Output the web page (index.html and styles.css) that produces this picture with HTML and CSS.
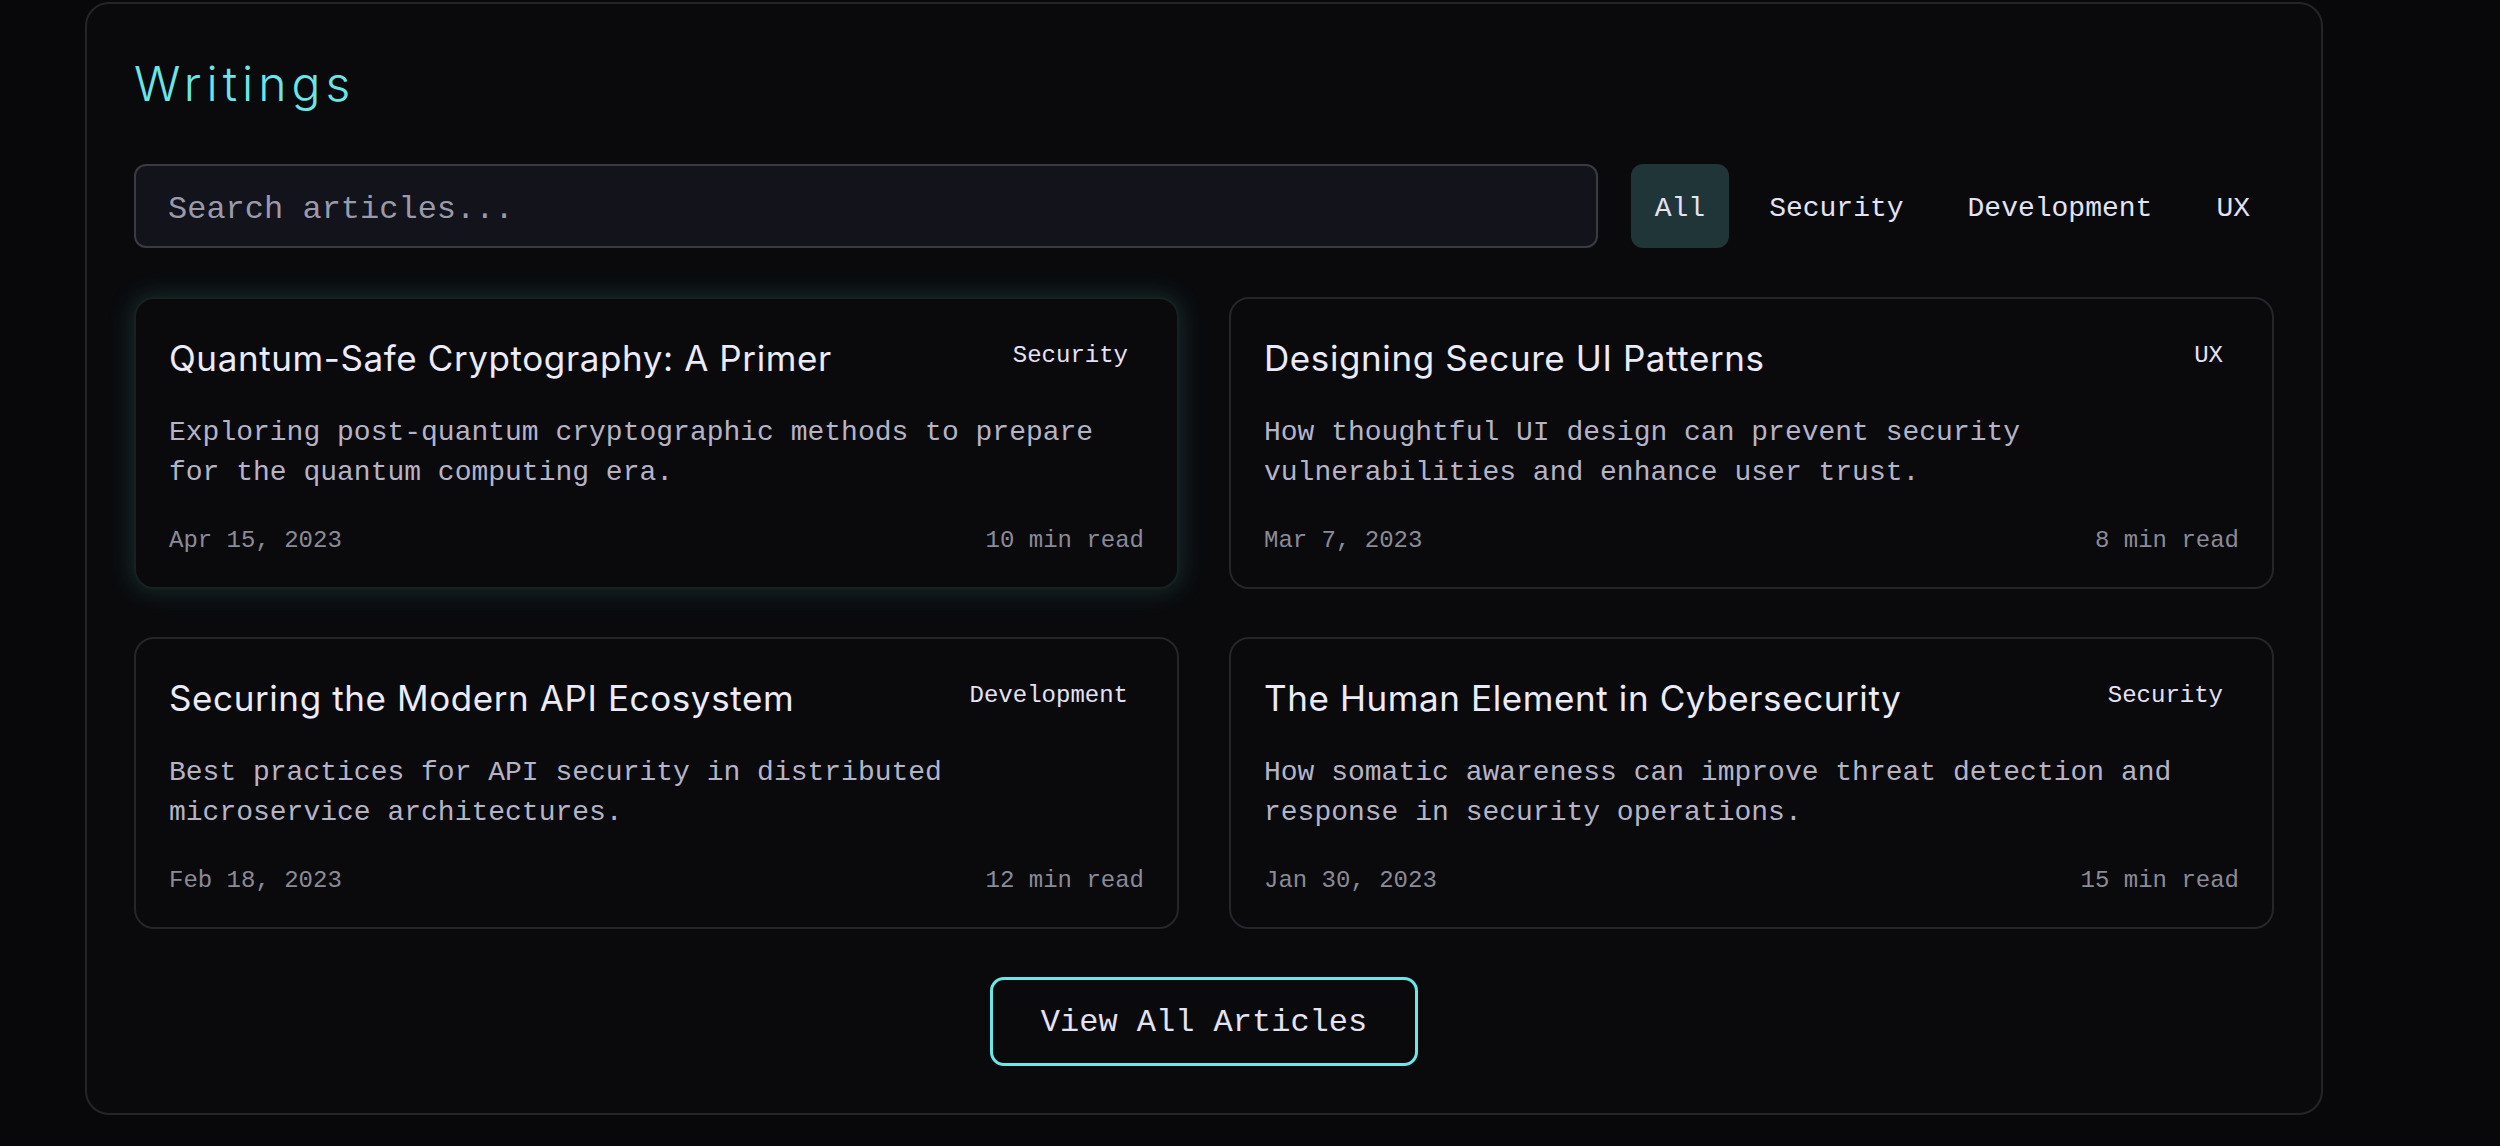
FILE: index.html
```html
<!DOCTYPE html>
<html lang="en">
<head>
<meta charset="utf-8">
<title>Writings</title>
<link rel="stylesheet" href="styles.css">
</head>
<body>
<div class="page">
  <section class="panel">
    <h2 class="panel-title">Writings</h2>
    <div class="toolbar">
      <input class="search" type="text" placeholder="Search articles...">
      <div class="filters">
        <button class="filter active">All</button>
        <button class="filter">Security</button>
        <button class="filter">Development</button>
        <button class="filter">UX</button>
      </div>
    </div>
    <div class="grid">
      <article class="card featured">
        <div class="card-head">
          <h3 class="card-title">Quantum-Safe Cryptography: A Primer</h3>
          <span class="tag">Security</span>
        </div>
        <p class="card-desc">Exploring post-quantum cryptographic methods to prepare for the quantum computing era.</p>
        <div class="card-meta"><span>Apr 15, 2023</span><span>10 min read</span></div>
      </article>
      <article class="card">
        <div class="card-head">
          <h3 class="card-title">Designing Secure UI Patterns</h3>
          <span class="tag">UX</span>
        </div>
        <p class="card-desc">How thoughtful UI design can prevent security vulnerabilities and enhance user trust.</p>
        <div class="card-meta"><span>Mar 7, 2023</span><span>8 min read</span></div>
      </article>
      <article class="card">
        <div class="card-head">
          <h3 class="card-title">Securing the Modern API Ecosystem</h3>
          <span class="tag">Development</span>
        </div>
        <p class="card-desc">Best practices for API security in distributed microservice architectures.</p>
        <div class="card-meta"><span>Feb 18, 2023</span><span>12 min read</span></div>
      </article>
      <article class="card">
        <div class="card-head">
          <h3 class="card-title">The Human Element in Cybersecurity</h3>
          <span class="tag">Security</span>
        </div>
        <p class="card-desc">How somatic awareness can improve threat detection and response in security operations.</p>
        <div class="card-meta"><span>Jan 30, 2023</span><span>15 min read</span></div>
      </article>
    </div>
    <div class="more">
      <button class="more-btn">View All Articles</button>
    </div>
  </section>
</div>
</body>
</html>
```

FILE: styles.css
```css
* {
  box-sizing: border-box;
}

html, body {
  margin: 0;
  padding: 0;
  background: #08080a;
}

body {
  font-family: "Liberation Mono", "DejaVu Sans Mono", monospace;
  color: #e4e2f5;
}

.page {
  padding: 2px 0 40px 85px;
}

.panel {
  width: 2238px;
  background: #0a0a0d;
  border: 2px solid #252529;
  border-radius: 24px;
  padding: 48px 47px 47px 47px;
}

.panel-title {
  margin: 0 0 48px 0;
  font-family: "Inter", "Noto Sans", sans-serif;
  font-weight: 300;
  font-size: 48px;
  line-height: 64px;
  letter-spacing: 5px;
  color: #6ae6e8;
}

.toolbar {
  display: flex;
  align-items: center;
  gap: 33px;
  margin-bottom: 49px;
}

.search {
  flex: 1;
  height: 84px;
  padding: 6px 32px 0 32px;
  background: #13131b;
  border: 2px solid #3a3a45;
  border-radius: 12px;
  font-family: "Liberation Mono", "DejaVu Sans Mono", monospace;
  font-size: 32px;
  color: #e4e2f5;
  outline: none;
}

.search::placeholder {
  color: #9b9aab;
}

.filters {
  display: flex;
  gap: 16px;
}

.filter {
  height: 84px;
  padding: 6px 24px 0 24px;
  border: none;
  border-radius: 12px;
  background: transparent;
  font-family: "Liberation Mono", "DejaVu Sans Mono", monospace;
  font-size: 28px;
  line-height: 40px;
  color: #e4e2f5;
}

.filter.active {
  background: #203538;
}

.grid {
  display: grid;
  grid-template-columns: 1fr 1fr;
  gap: 48px 50px;
}

.card {
  height: 292px;
  background: #0a0a0d;
  border: 2px solid #25252a;
  border-radius: 20px;
  padding: 33px 33px 31px 33px;
}

.card.featured {
  border-color: #16221f;
  box-shadow: 0 0 22px 5px rgba(80, 200, 180, 0.15);
}

.card-head {
  display: flex;
  justify-content: space-between;
  align-items: flex-start;
  gap: 24px;
}

.card-title {
  margin: 0;
  padding-top: 2px;
  font-family: "Inter", "Noto Sans", sans-serif;
  font-weight: 400;
  font-size: 35px;
  line-height: 49px;
  letter-spacing: 0.6px;
  color: #ecebfa;
}

.tag {
  flex-shrink: 0;
  padding: 8px 16px;
  font-size: 24px;
  line-height: 32px;
  color: #e4e2f5;
}

.card-desc {
  margin: 30px 0 0 0;
  font-size: 28px;
  line-height: 40px;
  color: #b5b4c6;
}

.card-meta {
  display: flex;
  justify-content: space-between;
  margin-top: 36px;
  font-size: 24px;
  line-height: 24px;
  color: #8b8a99;
}

.more {
  display: flex;
  justify-content: center;
  margin-top: 48px;
}

.more-btn {
  padding: 19px 48px 16px 48px;
  background: transparent;
  border: 3px solid #6ee6e8;
  border-radius: 14px;
  font-family: "Liberation Mono", "DejaVu Sans Mono", monospace;
  font-size: 32px;
  line-height: 48px;
  color: #e4e2f5;
}
```
